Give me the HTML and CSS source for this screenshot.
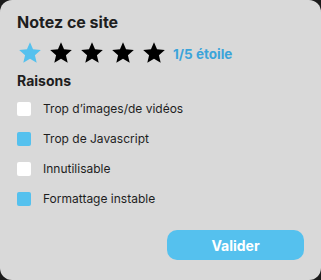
FILE: index.html
```html
<!DOCTYPE html>
<html lang="fr">
<head>
<meta charset="utf-8">
<link rel="stylesheet" href="styles.css">
</head>
<body>
<div class="card">
  <h1 class="title">Notez ce site</h1>
  <div class="stars">
    <svg class="star on" viewBox="0 0 24 24"><path d="M12 17.27L18.18 21l-1.64-7.03L22 9.24l-7.19-.61L12 2 9.19 8.63 2 9.24l5.46 4.73L5.82 21z"/></svg>
    <svg class="star" viewBox="0 0 24 24"><path d="M12 17.27L18.18 21l-1.64-7.03L22 9.24l-7.19-.61L12 2 9.19 8.63 2 9.24l5.46 4.73L5.82 21z"/></svg>
    <svg class="star" viewBox="0 0 24 24"><path d="M12 17.27L18.18 21l-1.64-7.03L22 9.24l-7.19-.61L12 2 9.19 8.63 2 9.24l5.46 4.73L5.82 21z"/></svg>
    <svg class="star" viewBox="0 0 24 24"><path d="M12 17.27L18.18 21l-1.64-7.03L22 9.24l-7.19-.61L12 2 9.19 8.63 2 9.24l5.46 4.73L5.82 21z"/></svg>
    <svg class="star" viewBox="0 0 24 24"><path d="M12 17.27L18.18 21l-1.64-7.03L22 9.24l-7.19-.61L12 2 9.19 8.63 2 9.24l5.46 4.73L5.82 21z"/></svg>
    <span class="score">1/5 étoile</span>
  </div>
  <h2 class="subtitle">Raisons</h2>
  <ul class="reasons">
    <li class="reason"><span class="box"></span>Trop d’images/de vidéos</li>
    <li class="reason"><span class="box checked"></span>Trop de Javascript</li>
    <li class="reason"><span class="box"></span>Innutilisable</li>
    <li class="reason"><span class="box checked"></span>Formattage instable</li>
  </ul>
  <div class="actions">
    <button class="submit">Valider</button>
  </div>
</div>
</body>
</html>
```
FILE: styles.css
```css
html, body {
  margin: 0;
  padding: 0;
  background: #1c1c1c;
}
body {
  width: 321px;
  height: 280px;
  font-family: Inter, "Noto Sans", sans-serif;
  color: #1e1e1e;
}
.card {
  box-sizing: border-box;
  width: 321px;
  height: 280px;
  background: #d9d9d9;
  border-radius: 12px;
  padding: 11px 17px 20px;
  display: flex;
  flex-direction: column;
}
.title {
  margin: 0;
  font-size: 16px;
  font-weight: 700;
  line-height: 22px;
}
.stars {
  display: flex;
  align-items: center;
  gap: 5px;
  margin-top: 7px;
  height: 26px;
}
.star {
  width: 26px;
  height: 26px;
  fill: #000;
  display: block;
}
.star.on {
  fill: #55c1ee;
}
.score {
  margin-left: 1px;
  font-size: 13.5px;
  font-weight: 700;
  color: #3ba4da;
  padding-top: 2px;
}
.subtitle {
  margin: 5px 0 0;
  font-size: 14px;
  font-weight: 700;
  line-height: 20px;
}
.reasons {
  list-style: none;
  margin: 11px 0 0;
  padding: 0;
  display: flex;
  flex-direction: column;
  gap: 16px;
}
.reason {
  display: flex;
  align-items: center;
  gap: 12px;
  font-size: 12px;
  line-height: 14px;
  height: 14px;
}
.box {
  width: 14px;
  height: 14px;
  border-radius: 2px;
  background: #fff;
  flex: none;
}
.box.checked {
  background: #55c1ee;
}
.actions {
  margin-top: auto;
  display: flex;
  justify-content: flex-end;
}
.submit {
  width: 137px;
  height: 30px;
  border: none;
  border-radius: 10px;
  background: #55c1ee;
  color: #fff;
  font-family: Inter, "Noto Sans", sans-serif;
  font-size: 14px;
  font-weight: 700;
  padding: 0;
}
```
